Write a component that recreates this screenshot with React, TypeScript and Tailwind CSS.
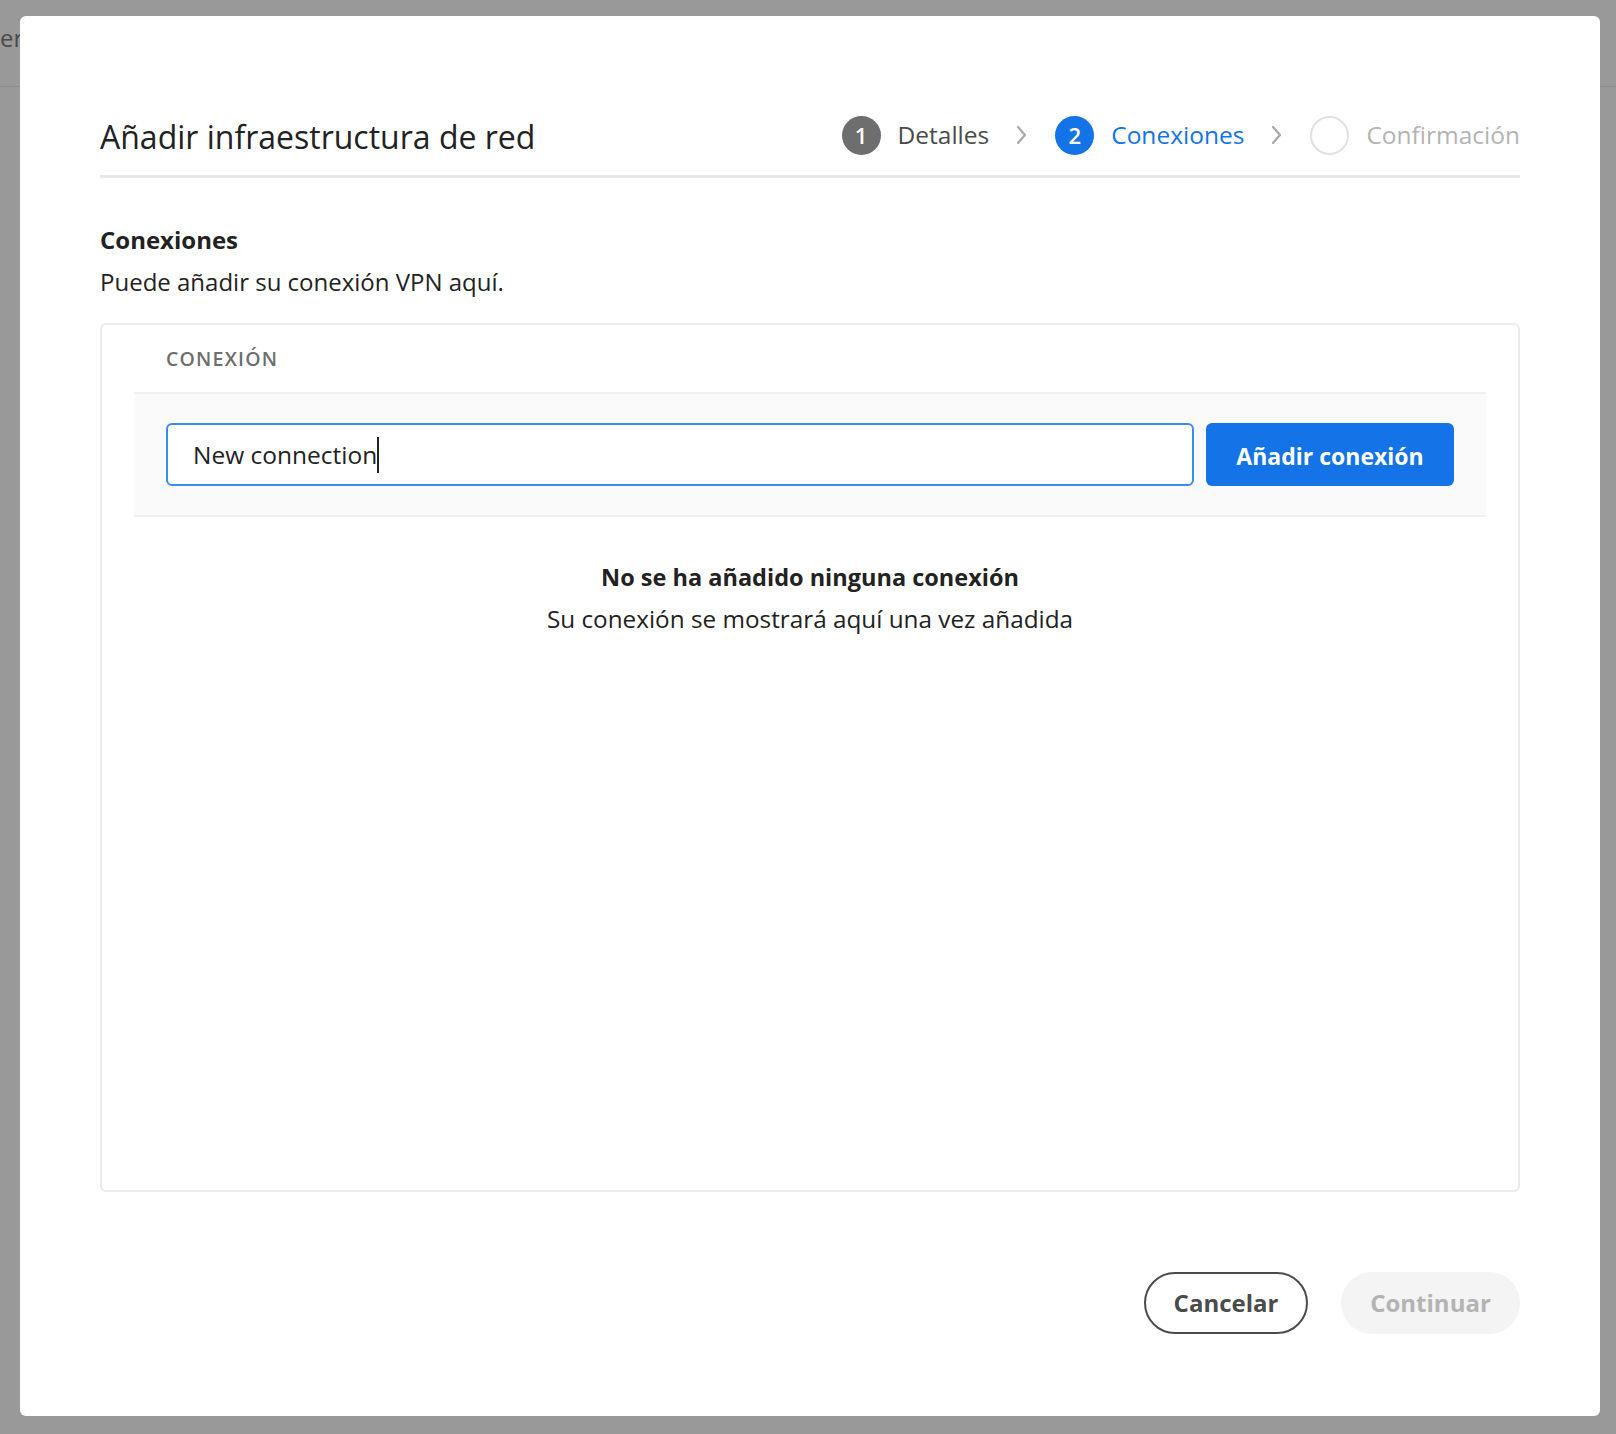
import React from 'react';

const font = { fontFamily: '"Open Sans", "Noto Sans", sans-serif' };

function Chevron() {
  return (
    <svg width="14" height="22" viewBox="0 0 14 22" className="mx-[26px]">
      <path d="M3 3 L10 11 L3 19" fill="none" stroke="#a8a8a8" strokeWidth="2.2" strokeLinecap="round" strokeLinejoin="round" />
    </svg>
  );
}

function Stepper() {
  return (
    <div className="flex items-center">
      <div className="flex items-center">
        <div className="w-[39px] h-[39px] rounded-full bg-[#6e6e6e] text-white flex items-center justify-center text-[22px] font-semibold">1</div>
        <span className="ml-[17px] text-[24.5px] text-[#4b4b4b]">Detalles</span>
      </div>
      <Chevron />
      <div className="flex items-center">
        <div className="w-[39px] h-[39px] rounded-full bg-[#1473e6] text-white flex items-center justify-center text-[22px] font-semibold">2</div>
        <span className="ml-[17px] text-[24.5px] text-[#1473e6]">Conexiones</span>
      </div>
      <Chevron />
      <div className="flex items-center">
        <div className="w-[39px] h-[39px] rounded-full border-2 border-[#e1e1e1]" />
        <span className="ml-[17px] text-[24.5px] text-[#b3b3b3]">Confirmación</span>
      </div>
    </div>
  );
}

export default function App() {
  return (
    <div className="relative w-[1616px] h-[1434px] bg-[#999999] overflow-hidden" style={font}>
      {/* page behind the modal */}
      <div className="h-[87px] border-b border-[#8c8c8c] pt-[22px]">
        <span className="block text-[24px] leading-[32px] text-[#4a4a4a]">er</span>
      </div>

      <div className="absolute left-[20px] top-[16px] w-[1580px] h-[1400px] bg-white rounded-[6px] px-[80px] pt-[96px] pb-[82px] flex flex-col">
        <div className="flex items-center justify-between h-[48px] pb-[2px]">
          <h1 className="pt-[4px] text-[32px] text-[#222222] leading-none">Añadir infraestructura de red</h1>
          <Stepper />
        </div>
        <div className="mt-[15px] h-[3px] bg-[#e8e8e8]" />

        <h2 className="mt-[48px] text-[24px] font-bold text-[#222222] leading-[28px]">Conexiones</h2>
        <p className="mt-[14px] text-[24px] text-[#222222] leading-[28px]">Puede añadir su conexión VPN aquí.</p>

        <div className="mt-[27px] flex-1 border-2 border-[#ebebeb] rounded-[6px] px-[32px] flex flex-col">
          <div className="h-[67px] flex items-center pl-[32px]">
            <span className="text-[19.5px] font-semibold tracking-[1.2px] text-[#6e6e6e]">CONEXIÓN</span>
          </div>
          <div className="bg-[#fafafa] border-t-2 border-b-2 border-[#f0f0f0] px-[32px] py-[29px] flex gap-[12px]">
            <div className="flex-1 h-[63px] border-2 border-[#378ef0] rounded-[6px] bg-white flex items-center px-[25px]">
              <span className="text-[24.5px] text-[#222222] leading-[32px]">New connection</span>
              <span className="w-[2px] h-[36px] bg-[#222222]" />
            </div>
            <button className="w-[248px] h-[63px] pt-[3px] rounded-[6px] bg-[#1473e6] text-white text-[23px] font-bold">
              Añadir conexión
            </button>
          </div>
          <div className="mt-[44px] flex flex-col items-center text-[#222222]">
            <p className="text-[23.5px] font-bold leading-[32px]">No se ha añadido ninguna conexión</p>
            <p className="mt-[10px] text-[24.3px] leading-[32px]">Su conexión se mostrará aquí una vez añadida</p>
          </div>
        </div>

        <div className="mt-[80px] flex justify-end gap-[33px]">
          <button className="w-[164px] h-[62px] rounded-full border-2 border-[#4b4b4b] text-[24px] font-bold text-[#4b4b4b]">
            Cancelar
          </button>
          <button className="w-[179px] h-[62px] rounded-full bg-[#f4f4f4] text-[24px] font-bold text-[#b3b3b3]">
            Continuar
          </button>
        </div>
      </div>
    </div>
  );
}
